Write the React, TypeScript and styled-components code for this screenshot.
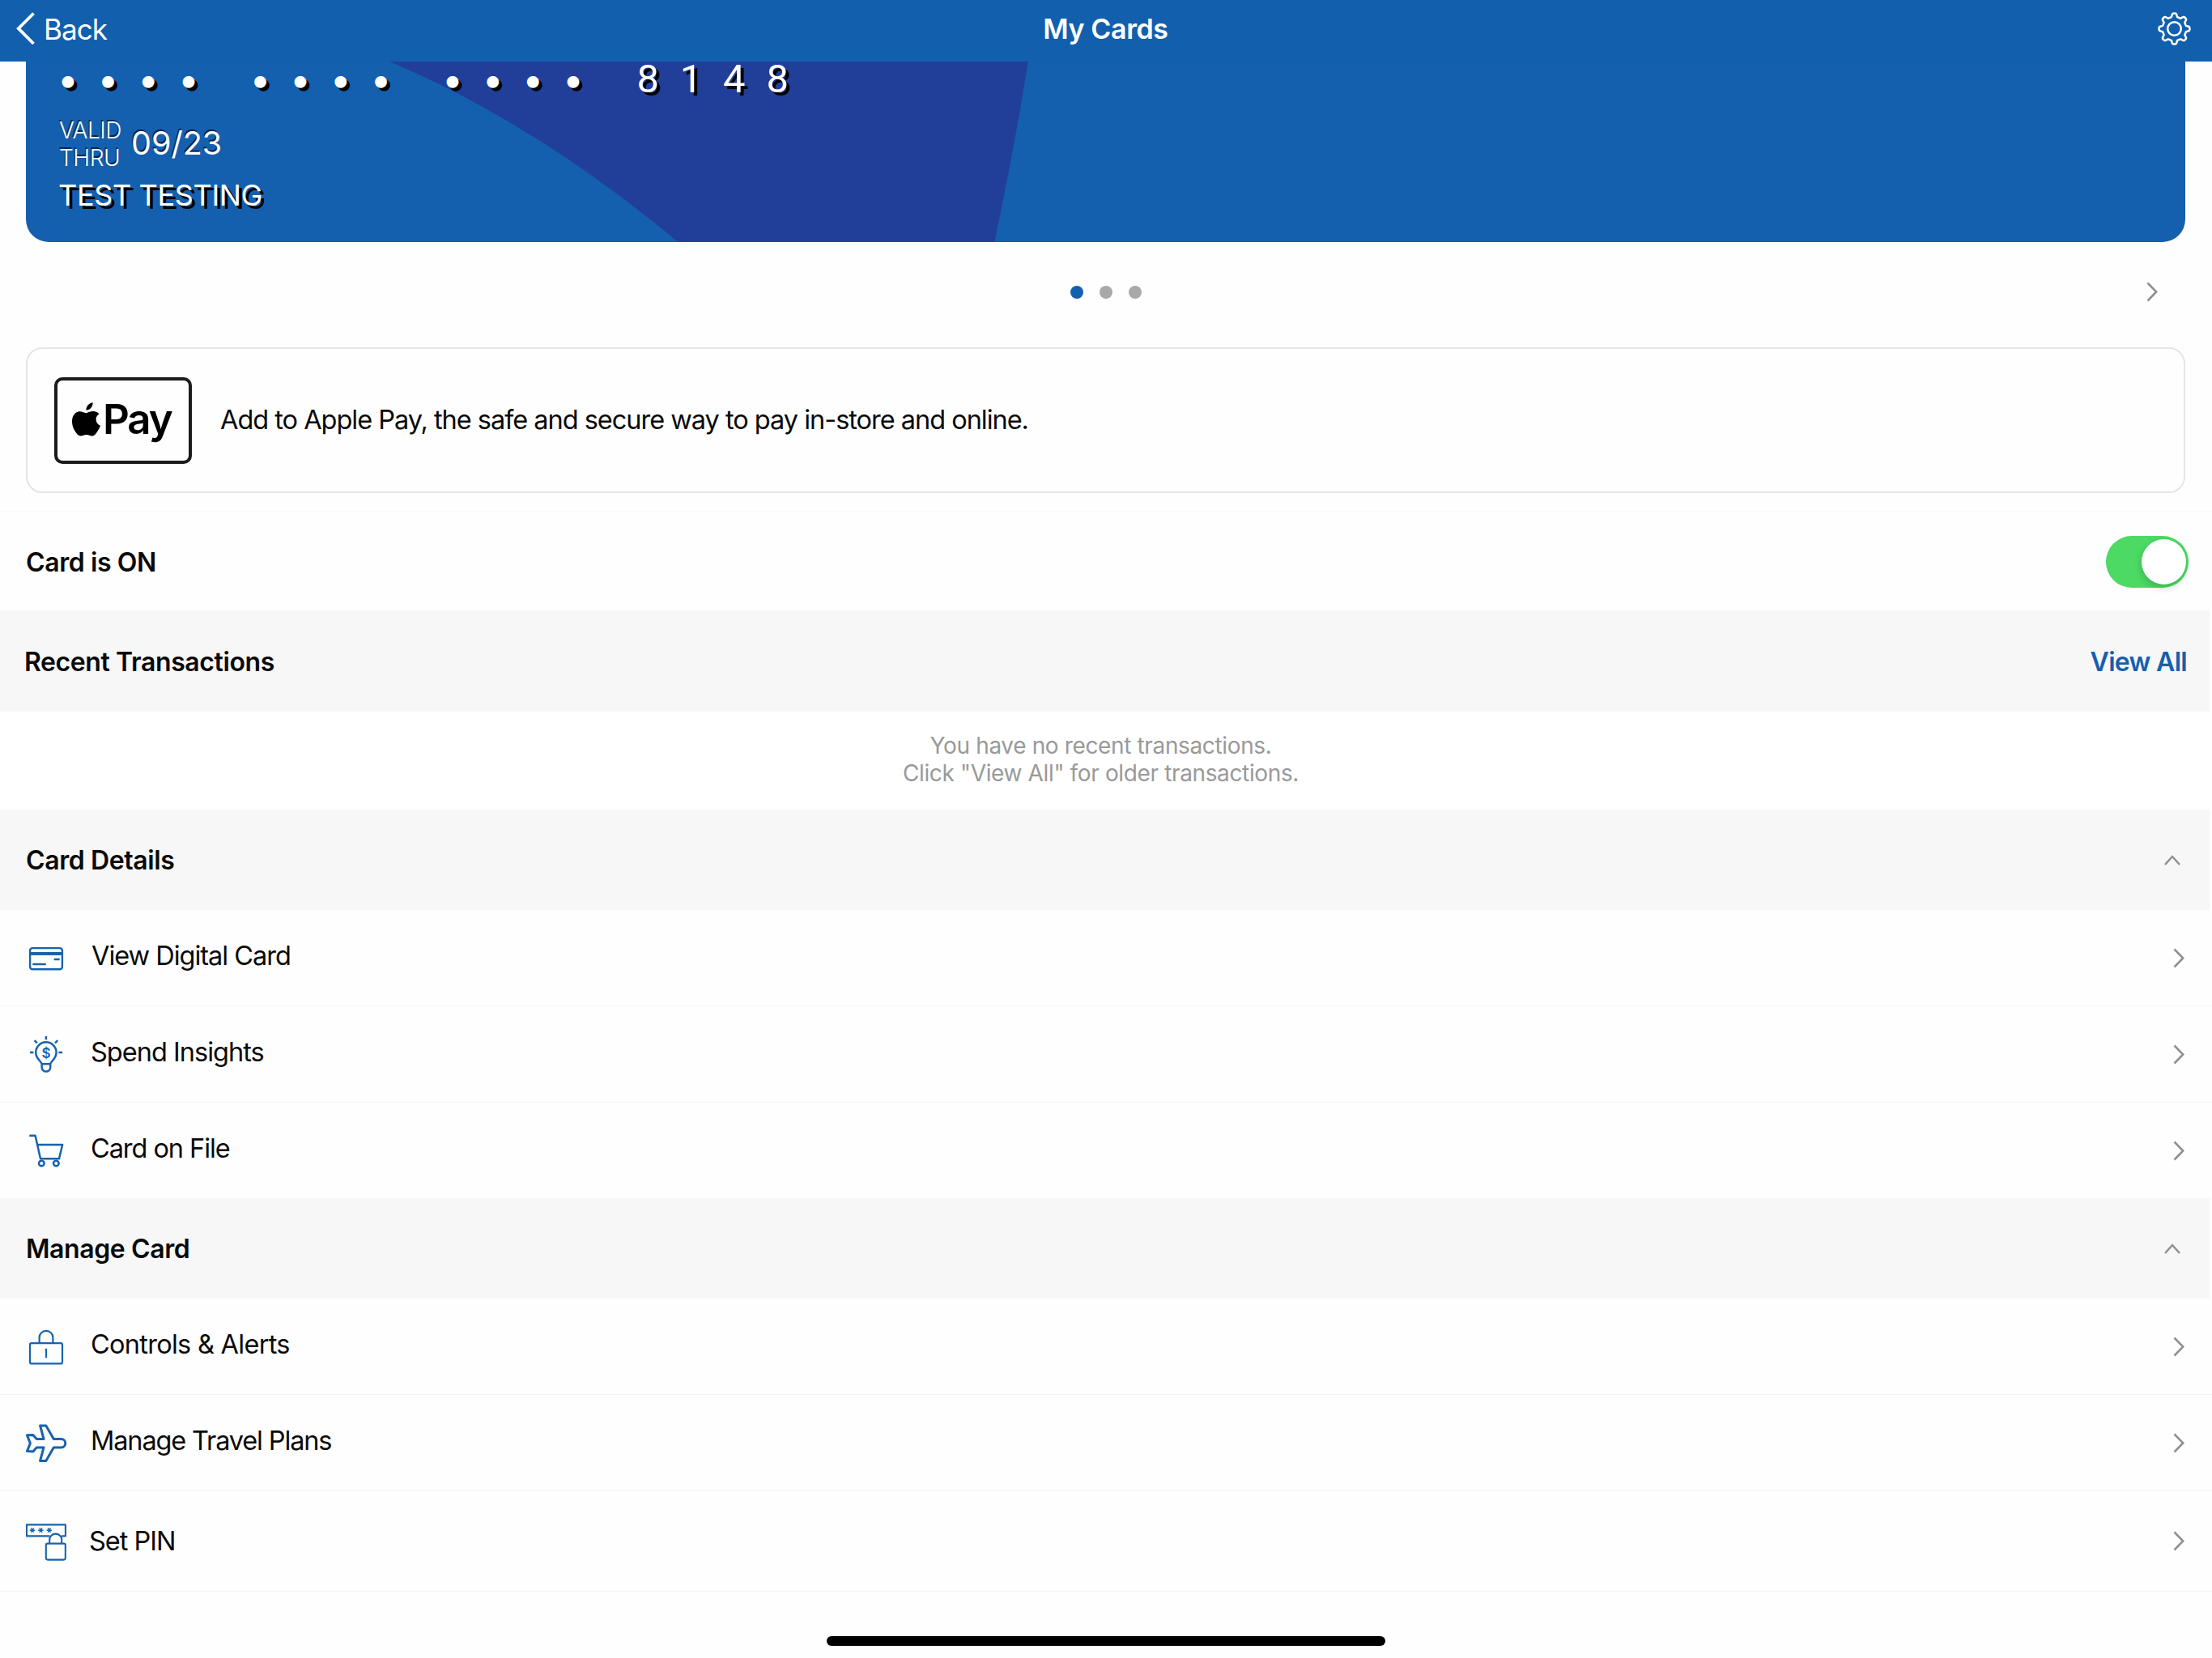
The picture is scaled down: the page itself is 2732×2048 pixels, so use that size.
import React from "react";
import styled, { createGlobalStyle } from "styled-components";

const BLUE = "#1460ae";
const ICON_BLUE = "#1763ae";
const GREY = "#8f8f8f";

const GlobalStyle = createGlobalStyle`
  *, *::before, *::after { box-sizing: border-box; }
  body {
    margin: 0;
    background: #fefefe;
    color: #0a0a0a;
    font-family: Inter, "Liberation Sans", sans-serif;
  }
  svg { display: block; flex: none; }
`;

const Screen = styled.div`
  width: 2732px;
  height: 2048px;
  display: flex;
  flex-direction: column;
  overflow: hidden;
`;

const NavBar = styled.header`
  flex: none;
  height: 76px;
  display: grid;
  grid-template-columns: 1fr auto 1fr;
  align-items: center;
  padding: 0 26px 5px 20px;
  background: #125fae;
  color: #fff;
`;

const BackButton = styled.a`
  display: flex;
  align-items: center;
  gap: 10px;
  font-size: 35px;
  letter-spacing: -0.9px;
  line-height: 44px;
`;

const Title = styled.h1`
  margin: 0 0 0 5px;
  font-size: 34px;
  font-weight: 600;
  line-height: 44px;
  letter-spacing: -0.39px;
`;

const SettingsButton = styled.a`
  justify-self: end;
`;

const BankCard = styled.section`
  position: relative;
  flex: none;
  margin: 0 33px 0 32px;
  height: 222.5px;
  border-radius: 0 0 28px 28px;
  background: ${BLUE};
  color: #fff;
`;

const CardArt = styled.svg`
  position: absolute;
  inset: 0;
`;

const CardFace = styled.div`
  position: relative;
  display: flex;
  flex-direction: column;
`;

const CardNumber = styled.div`
  display: flex;
  height: 44px;
  gap: 38.8px;
  padding-left: 27px;
  text-shadow: 4px 4px 0 #000;
`;

const DigitGroup = styled.div<{ $cell: number; $digits?: boolean }>`
  display: grid;
  grid-template-columns: repeat(4, ${(p) => p.$cell}px);
  justify-items: center;
  margin-left: ${(p) => (p.$digits ? 2 : 0)}px;
  font-family: ${(p) => (p.$digits ? "Roboto" : "Inter")}, sans-serif;
  font-size: ${(p) => (p.$digits ? 49 : 47)}px;
  line-height: 44px;
`;

const Validity = styled.div`
  display: flex;
  align-items: center;
  gap: 12px;
  margin: 24px 0 0 41px;
  text-shadow: -1px -2px 0 rgba(0, 10, 40, 0.75);
`;

const ValidLabel = styled.div`
  width: 77px;
  font-size: 28px;
  font-weight: 300;
  line-height: 34px;
  letter-spacing: -0.45px;
`;

const ValidDate = styled.div`
  font-size: 39.5px;
  font-weight: 400;
  line-height: 66px;
  padding-bottom: 2px;
  letter-spacing: 0;
`;

const Holder = styled.div`
  margin: 8px 0 0 40px;
  font-size: 36px;
  line-height: 42px;
  letter-spacing: -0.35px;
  text-shadow: 4px 4px 0 #000;
`;

const Pager = styled.div`
  flex: none;
  height: 125.5px;
  display: grid;
  grid-template-columns: 1fr auto 1fr;
  align-items: center;
  padding: 0 67px;
`;

const PagerDots = styled.div`
  grid-column: 2;
  display: flex;
  gap: 20px;
`;

const PagerDot = styled.span<{ $active?: boolean }>`
  width: 16px;
  height: 16px;
  border-radius: 50%;
  background: ${(p) => (p.$active ? BLUE : "#a9a9a9")};
`;

const PagerNext = styled.a`
  justify-self: end;
  padding-bottom: 2px;
`;

const WalletCard = styled.section`
  flex: none;
  height: 180px;
  margin: 5px 33px 22px 32px;
  display: flex;
  align-items: center;
  gap: 35px;
  padding-left: 33px;
  border: 2px solid #e5e5e7;
  border-radius: 20px;
`;

const PayMark = styled.div`
  width: 170px;
  height: 107px;
  display: flex;
  align-items: center;
  gap: 3px;
  padding: 0 0 3px 18px;
  border: 4px solid #1b1b1b;
  border-radius: 10px;
`;

const PayWord = styled.span`
  font-size: 51px;
  font-weight: 600;
  line-height: 60px;
  letter-spacing: -2.1px;
  color: #000;
`;

const BodyText = styled.span<{ $raise?: number; $track?: number }>`
  font-size: 32.5px;
  line-height: 44px;
  letter-spacing: ${(p) => p.$track ?? -1.02}px;
  padding-bottom: ${(p) => p.$raise ?? 0}px;
`;

const BoldText = styled.span`
  padding-top: 2px;
  font-size: 32px;
  font-weight: 600;
  line-height: 44px;
  letter-spacing: -0.4px;
`;

const SwitchRow = styled.div`
  flex: none;
  height: 123px;
  display: flex;
  align-items: center;
  justify-content: space-between;
  padding: 0 29px 0 32px;
  border-top: 2px solid #fafafa;
`;

const Switch = styled.button`
  width: 102px;
  height: 64px;
  display: flex;
  align-items: center;
  justify-content: flex-end;
  padding: 0 3px;
  border: 0;
  border-radius: 32px;
  background: #4cd964;
`;

const Knob = styled.span`
  width: 55px;
  height: 56px;
  border-radius: 50%;
  background: #fff;
  box-shadow: -1px 4px 8px rgba(0, 60, 20, 0.22);
`;

const SectionBar = styled.div<{ $height: number; $inset?: number }>`
  flex: none;
  height: ${(p) => p.$height}px;
  margin-right: 3px;
  display: flex;
  align-items: center;
  justify-content: space-between;
  padding: 0 ${(p) => p.$inset ?? 36}px 0 ${(p) => (p.$inset ? 30 : 32)}px;
  background: #f7f7f7;
`;

const ViewAll = styled(BoldText)`
  color: ${BLUE};
  letter-spacing: -0.7px;
`;

const EmptyNote = styled.p`
  flex: none;
  height: 121px;
  margin: 0;
  padding: 24.5px 13px 0 0;
  background: #fff;
  color: #999;
  font-size: 28px;
  line-height: 34px;
  letter-spacing: -0.36px;
  text-align: center;
`;

const MenuRow = styled.a<{ $height: number; $line?: boolean; $gap: number }>`
  flex: none;
  height: ${(p) => p.$height}px;
  display: flex;
  align-items: center;
  gap: ${(p) => p.$gap}px;
  padding: 0 34px 0 32px;
  border-bottom: ${(p) => (p.$line ? 1 : 0)}px solid #f3f3f3;
`;

const Spacer = styled.span`
  flex: 1;
`;

const HomeIndicator = styled.div`
  flex: none;
  width: 690px;
  height: 12px;
  margin: auto auto 15px;
  border-radius: 6px;
  background: #000;
`;

const ChevronRight = () => (
  <svg width="14" height="25" viewBox="0 0 14 25" fill="none" stroke={GREY} strokeWidth="2.6">
    <path d="M1.5 1.5L12.3 12.5L1.5 23.5" />
  </svg>
);

const ChevronUp = () => (
  <svg width="20" height="13" viewBox="0 0 20 13" fill="none" stroke={GREY} strokeWidth="2.5">
    <path d="M1 12L10 2L19 12" />
  </svg>
);

// Eight-toothed cog outline, sampled around the circle.
const gearPath = (() => {
  const points: string[] = [];
  for (let i = 0; i < 320; i++) {
    const a = (i / 320) * Math.PI * 2;
    const r = 16.9 + 2.2 * Math.tanh(2.2 * (Math.cos(8 * a) - 0.15));
    points.push(`${(20.5 + r * Math.sin(a)).toFixed(2)} ${(20.5 - r * Math.cos(a)).toFixed(2)}`);
  }
  return `M${points.join("L")}Z`;
})();

const Gear = () => (
  <svg width="41" height="41" viewBox="0 0 41 41" fill="none" stroke="#fff" strokeWidth="2.5" strokeLinejoin="round">
    <path d={gearPath} />
    <circle cx="20.5" cy="20.5" r="8.3" />
  </svg>
);

const BackChevron = () => (
  <svg width="24" height="42" viewBox="0 0 24 42" fill="none" stroke="#fff" strokeWidth="3.8">
    <path d="M21.5 1.5L2.8 20.2L21.5 39" />
  </svg>
);

const AppleGlyph = () => (
  <svg width="35" height="42" viewBox="0 0 35 42" fill="#000">
    <path d="M25.6 0.2C25.8 2.7 24.9 4.9 23.4 6.7C21.9 8.5 19.7 9.8 17.4 9.6C17.2 7.3 18.2 5 19.6 3.4C21.1 1.6 23.6 0.3 25.6 0.2Z" />
    <path d="M33.6 14.3C31.3 15.8 29.6 18 29.6 21C29.6 24.6 31.7 27.3 34.9 28.7C34.2 31 33.1 33.3 31.6 35.5C29.4 38.8 27.6 41.6 24.6 41.6C21.8 41.6 20.9 40 17.7 40C14.4 40 13.4 41.6 10.8 41.6C7.8 41.6 5.7 38.7 3.6 35.6C1.5 32.4 0 28 0 23.4C0 15.9 4.6 11.3 9.8 11.3C12.8 11.3 15.3 13.2 17.2 13.2C19 13.2 21.9 11.1 25.3 11.1C28.6 11.1 31.7 12.2 33.6 14.3Z" />
  </svg>
);

const LineIcon = styled.svg.attrs({ width: 50, height: 50, viewBox: "0 0 50 50", fill: "none" })<{ $weight?: number }>`
  stroke: ${ICON_BLUE};
  stroke-width: ${(p) => p.$weight ?? 2.4}px;
  stroke-linejoin: round;
  overflow: visible;
`;

const Stripe = styled.path`
  stroke-width: 4px;
`;

const Asterisk = styled.path`
  stroke-width: 1.4px;
`;

const DigitalCardIcon = () => (
  <LineIcon>
    <rect x="5.1" y="13.1" width="39.8" height="26.2" rx="3" />
    <Stripe d="M5 20H45" />
    <path d="M34.7 27H41.7M8.3 33H24.7" />
  </LineIcon>
);

const DollarSign = styled.text`
  font: 600 17px Inter, sans-serif;
  fill: ${ICON_BLUE};
  stroke: none;
  text-anchor: middle;
`;

const InsightsIcon = () => (
  <LineIcon $weight={2.5}>
    <path d="M19.6 37.2C19.6 34.6 12.2 30.8 12.2 23A12.7 12.7 0 0 1 37.6 23C37.6 30.8 30.2 34.6 30.2 37.2V41.3A5.3 5.3 0 0 1 19.6 41.3Z" />
    <path d="M19.6 37.2H30.2M24.9 3V7.2M10.6 8.2L13.8 11.4M39.2 8.2L36 11.4M5 23H9.4M40.4 23H45" />
    <DollarSign x="25.1" y="30">$</DollarSign>
  </LineIcon>
);

const CartIcon = () => (
  <LineIcon $weight={2.5}>
    <path d="M4.3 6.7H11.6L18 35.3H41L45.1 18H14" />
    <circle cx="19.3" cy="41" r="3.3" />
    <circle cx="37.3" cy="41" r="3.3" />
  </LineIcon>
);

const LockIcon = () => (
  <LineIcon $weight={2.2}>
    <rect x="5" y="21.1" width="40" height="25.3" rx="2" />
    <path d="M16.6 21V14.2A8.4 8.4 0 0 1 33.4 14.2V21M25 27.7V39.3" />
  </LineIcon>
);

const PlaneIcon = () => (
  <LineIcon $weight={3}>
    <path d="M34.3 20.5H43.6A5.2 5.2 0 0 1 43.6 30.9H34.3L24.8 47.4H17.6L22 30.9H13.3L8.8 35.9L1.4 35.6L5.4 25.7L1.4 15.8L8.8 15.5L13.3 20.5H22L17.6 4H24.8Z" />
  </LineIcon>
);

const PinIcon = () => (
  <LineIcon $weight={2.1}>
    <path d="M29.6 18.4H1V4.4H48.9V18.4H43.8" />
    <rect x="24.8" y="27.6" width="24" height="20" rx="2" />
    <path d="M29.2 27.5V22.6A7.5 7 0 0 1 44.2 22.6V27.5" />
    {[8, 18.4, 28.8].map((x) => (
      <Asterisk
        key={x}
        d={`M${x - 3.2} 11.2H${x + 3.2}M${x - 1.7} 8.4L${x + 1.7} 14M${x + 1.7} 8.4L${x - 1.7} 14`}
      />
    ))}
  </LineIcon>
);

type Item = {
  label: string;
  icon: React.ReactNode;
  height: number;
  line: boolean;
  raise: number;
  gap: number;
  track: number;
};

const detailItems: Item[] = [
  { label: "View Digital Card", icon: <DigitalCardIcon />, height: 119, line: true, raise: 5, gap: 31, track: -1.02 },
  { label: "Spend Insights", icon: <InsightsIcon />, height: 119, line: true, raise: 5, gap: 30, track: -0.98 },
  { label: "Card on File", icon: <CartIcon />, height: 118, line: false, raise: 5, gap: 30, track: -1.06 },
];

const manageItems: Item[] = [
  { label: "Controls & Alerts", icon: <LockIcon />, height: 119, line: true, raise: 4, gap: 30, track: -0.72 },
  { label: "Manage Travel Plans", icon: <PlaneIcon />, height: 119, line: true, raise: 4, gap: 30, track: -1.14 },
  { label: "Set PIN", icon: <PinIcon />, height: 124, line: true, raise: 0, gap: 28, track: -1 },
];

const Menu = ({ items }: { items: Item[] }) => (
  <>
    {items.map((item) => (
      <MenuRow key={item.label} $height={item.height} $line={item.line} $gap={item.gap}>
        {item.icon}
        <BodyText $raise={item.raise} $track={item.track}>
          {item.label}
        </BodyText>
        <Spacer />
        <ChevronRight />
      </MenuRow>
    ))}
  </>
);

export default function App() {
  return (
    <Screen>
      <GlobalStyle />
      <NavBar>
        <BackButton>
          <BackChevron />
          Back
        </BackButton>
        <Title>My Cards</Title>
        <SettingsButton>
          <Gear />
        </SettingsButton>
      </NavBar>

      <BankCard>
        <CardArt width="2667" height="222.5" viewBox="0 0 2667 222.5">
          <path d="M449 0Q627 75 805 222.5H1196.5Q1220 110 1238 0Z" fill="#213f99" />
        </CardArt>
        <CardFace>
          <CardNumber>
            {[0, 1, 2].map((group) => (
              <DigitGroup key={group} $cell={49.7}>
                {[0, 1, 2, 3].map((n) => (
                  <span key={n}>•</span>
                ))}
              </DigitGroup>
            ))}
            <DigitGroup $cell={53.3} $digits>
              {["8", "1", "4", "8"].map((d, i) => (
                <span key={i}>{d}</span>
              ))}
            </DigitGroup>
          </CardNumber>
          <Validity>
            <ValidLabel>
              VALID
              <br />
              THRU
            </ValidLabel>
            <ValidDate>09/23</ValidDate>
          </Validity>
          <Holder>TEST TESTING</Holder>
        </CardFace>
      </BankCard>

      <Pager>
        <PagerDots>
          <PagerDot $active />
          <PagerDot />
          <PagerDot />
        </PagerDots>
        <PagerNext>
          <ChevronRight />
        </PagerNext>
      </Pager>

      <WalletCard>
        <PayMark>
          <AppleGlyph />
          <PayWord>Pay</PayWord>
        </PayMark>
        <BodyText>Add to Apple Pay, the safe and secure way to pay in-store and online.</BodyText>
      </WalletCard>

      <SwitchRow>
        <BoldText>Card is ON</BoldText>
        <Switch>
          <Knob />
        </Switch>
      </SwitchRow>

      <SectionBar $height={125} $inset={28}>
        <BoldText>Recent Transactions</BoldText>
        <ViewAll>View All</ViewAll>
      </SectionBar>
      <EmptyNote>
        You have no recent transactions.
        <br />
        Click "View All" for older transactions.
      </EmptyNote>

      <SectionBar $height={124}>
        <BoldText>Card Details</BoldText>
        <ChevronUp />
      </SectionBar>
      <Menu items={detailItems} />

      <SectionBar $height={124}>
        <BoldText>Manage Card</BoldText>
        <ChevronUp />
      </SectionBar>
      <Menu items={manageItems} />

      <HomeIndicator />
    </Screen>
  );
}
